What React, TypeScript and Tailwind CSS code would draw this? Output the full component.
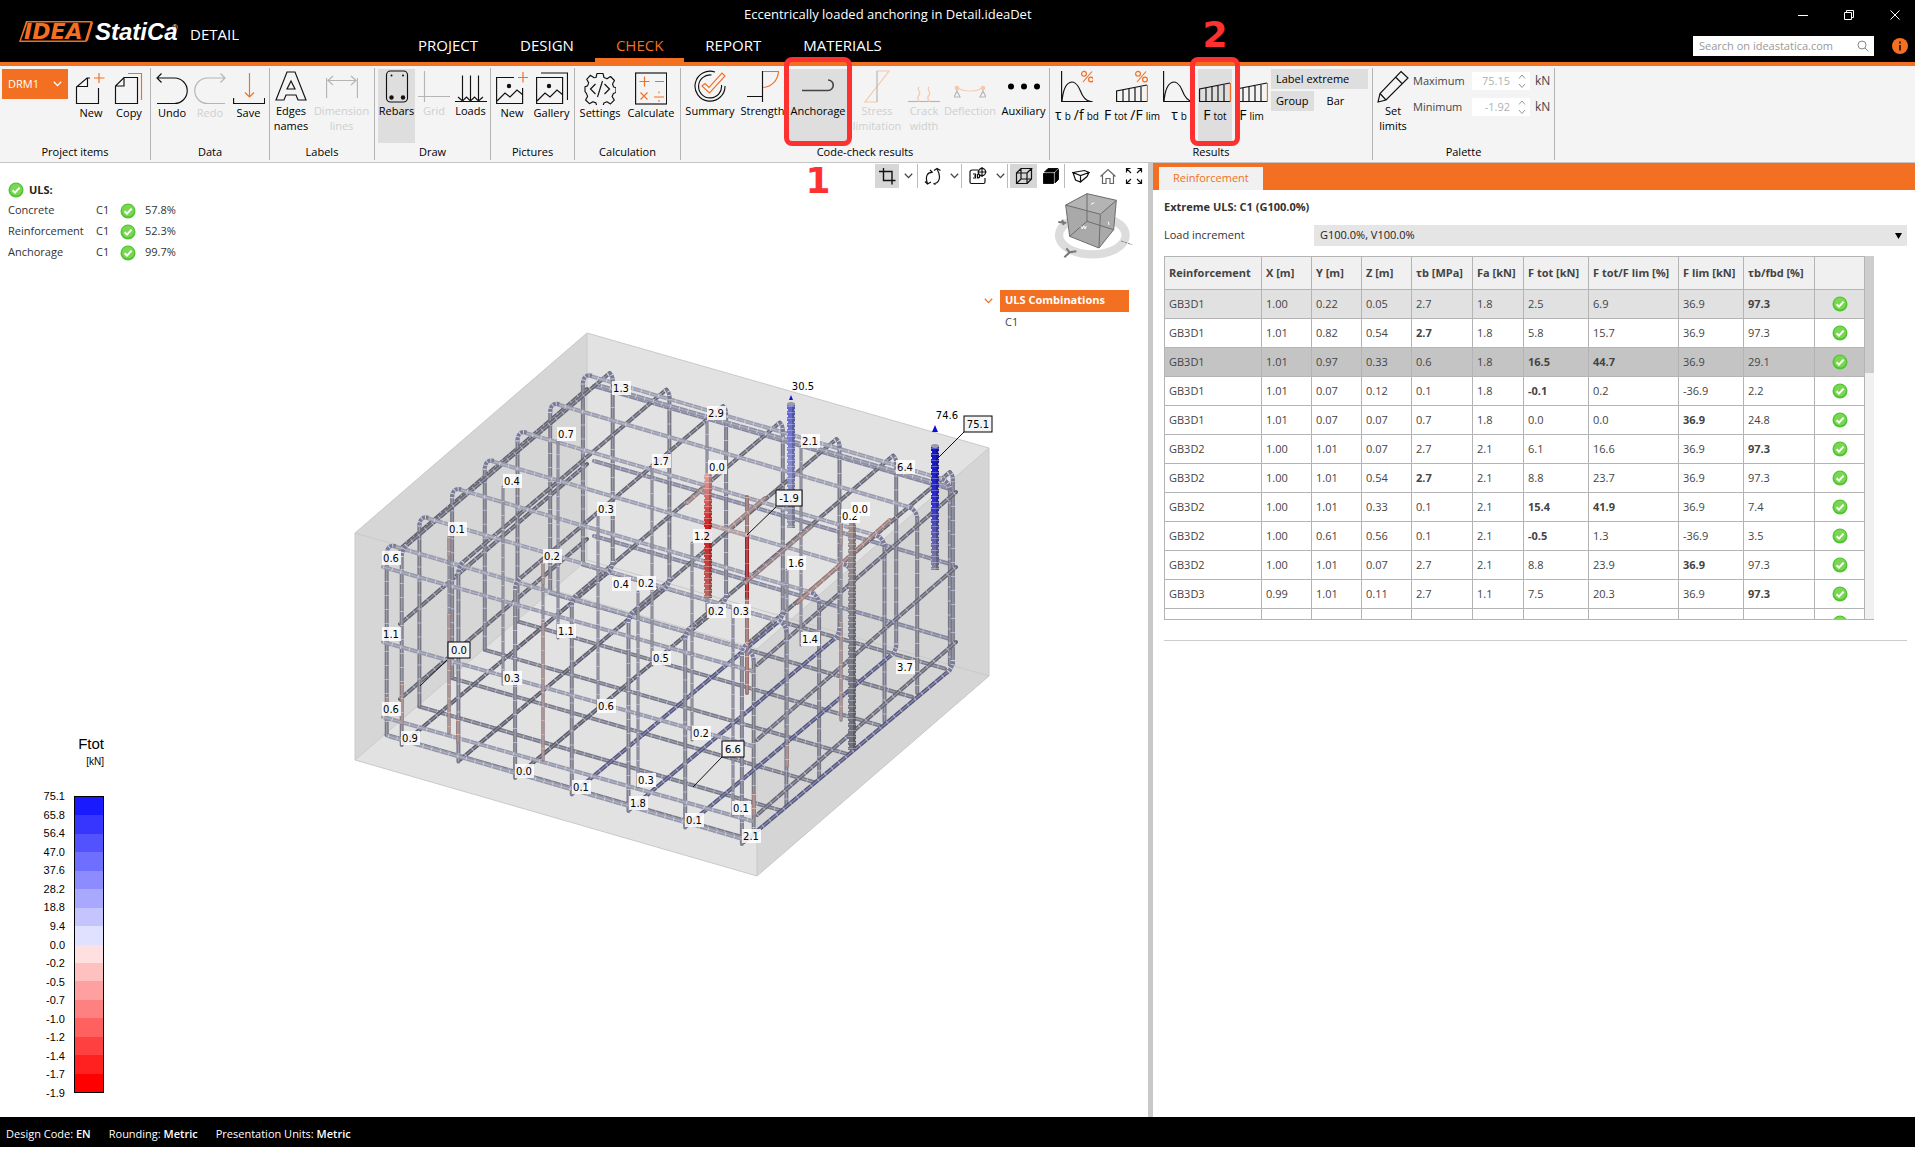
import type { ReactNode } from "react";
import { clsx } from "clsx";

const ORANGE = "#f36f21";

/* ---------- small shared bits ---------- */

function Check({ size = 16 }: { size?: number }) {
  return (
    <svg width={size} height={size} viewBox="0 0 16 16" className="shrink-0">
      <circle cx="8" cy="8" r="7.5" fill="#4fc531" />
      <circle cx="8" cy="7.6" r="6" fill="#7ad653" />
      <path d="M4.6 8.2 7 10.6l4.6-5" fill="none" stroke="#fff" strokeWidth="2" />
    </svg>
  );
}

function Chevron({ color = "#444" }: { color?: string }) {
  return (
    <svg width="9" height="6" viewBox="0 0 9 6" fill="none" stroke={color} strokeWidth="1.3">
      <path d="M.8.8 4.5 4.6 8.2.8" />
    </svg>
  );
}

function Icon({ children, color = "#111" }: { children: ReactNode; color?: string }) {
  return (
    <svg width="32" height="33" viewBox="0 0 32 33" fill="none" stroke={color} strokeWidth="1.150" className="shrink-0">
      {children}
    </svg>
  );
}

/* ---------- ribbon icons ---------- */

const icons = {
  newDoc: (
    <Icon>
      <path d="M15 6h-3L1.500 15v16.500h22V16M12.500 6v8.500h-11" />
      <path d="M24 1v10M19 6h10.500" stroke={ORANGE} />
    </Icon>
  ),
  copy: (
    <Icon>
      <path d="M11 5.500h13.500v26h-22V14zM11 5.500V14H2.500" />
      <path d="M15 1.500h13.500V28" stroke={ORANGE} />
    </Icon>
  ),
  undo: (
    <Icon>
      <path d="M1 31.500h17.500a12.750 12.750 0 0 0 0-25.500H1M5.500 1.500 1 6l4.500 4.500" />
    </Icon>
  ),
  redo: (
    <Icon color="#b5b5b5">
      <path d="M31 31.500H13.500a12.750 12.750 0 0 1 0-25.500H31M26.500 1.500 31 6l-4.500 4.500" />
    </Icon>
  ),
  save: (
    <Icon>
      <path d="M.6 26v5.500h31V26" />
      <path d="M16.500 1v24M12 20.500l4.500 4.500 4.500-4.500" stroke={ORANGE} />
    </Icon>
  ),
  edges: (
    <Icon>
      <path d="M12 2h8l11 28h-8l-2-5H11l-2 5H1zM16 11l-4 8h8z" />
    </Icon>
  ),
  dimension: (
    <Icon color="#b5b5b5">
      <path d="M.6 8v20M31.400 8v20M2 10.500h28M7 6l-5 4.500L7 15M25 6l5 4.500-5 4.500" />
    </Icon>
  ),
  rebars: (
    <Icon>
      <rect x="5.500" y="1" width="21" height="31" rx="4" />
      <g fill="#111" stroke="none">
        <circle cx="10.500" cy="5.500" r="1" />
        <circle cx="22" cy="5.500" r="1" />
        <circle cx="10.500" cy="27.500" r="2.200" />
        <circle cx="22" cy="27.500" r="2.200" />
      </g>
    </Icon>
  ),
  grid: (
    <Icon color="#b5b5b5">
      <path d="M6.500 1v31M0 26.500h32" />
    </Icon>
  ),
  loads: (
    <Icon>
      <path d="M0 31.500h32M7.500 5.500V31M15.500 5.500V31M23.500 5.500V31M3 27l4.500 4 4-4 4 4 4-4 4 4 4.500-4" />
    </Icon>
  ),
  picture: (
    <Icon>
      <path d="M18 5.500H.6v26h26V16M1 29l8-8 5 4 7-7 6 5" />
      <circle cx="13" cy="14" r="1.600" fill="#111" />
      <path d="M27 0v10.500M22 5.500h10" stroke={ORANGE} />
    </Icon>
  ),
  gallery: (
    <Icon>
      <path d="M.6 5.500h26v26H.6zM5 1h26.500v27M1 29l8-8 5 4 7-7 6 5" />
      <circle cx="13" cy="14" r="1.600" fill="#111" />
    </Icon>
  ),
  settings: (
    <Icon>
      <path d="M13 1.500h6l1 4 3 1.300 3.500-2.300 4 4-2 3.500 1.200 3 2.300.8v4.700l-2.600 1-1.300 3 2.200 3.600-3.800 3.800-3.600-2.100-3 1.200-1 3.500h-6l-1-3.600-3-1.200-3.500 2-3.800-3.700 2-3.600-1.200-3L1 19.500v-4.700l2.500-.9 1.200-3-2-3.600 3.600-4 3.800 2.400L12 5.500z" strokeLinejoin="round" />
      <path d="m11.500 12-5 5 5 5M20.500 12l5 5-5 5M18.500 9l-5 16" />
    </Icon>
  ),
  calculate: (
    <Icon>
      <rect x=".6" y="1" width="31" height="31" />
      <path d="M4.500 9.500h10M9.500 4.500v10M20 9.500h9M5.500 20.500l7 7M12.500 20.500l-7 7M19 25h10M24 19.500v1.800M24 28v1.800" stroke={ORANGE} />
    </Icon>
  ),
  summary: (
    <Icon>
      <path d="M21 2a15 15 0 1 0 10 14M17.500 5a11.500 11.500 0 1 0 10 10" />
      <path d="m8 16 3-2.500 4 4L28 3l3 3-15.500 17z" stroke={ORANGE} />
    </Icon>
  ),
  strength: (
    <Icon>
      <path d="M0 26.500h16M15.500 1v31" />
      <path d="M16 1.500h15.500C31 10 25 16.500 16 17.500" stroke={ORANGE} />
    </Icon>
  ),
  anchorage: (
    <Icon color="#444">
      <path d="M0 20.500h26a5 5 0 0 0 0-10.500" strokeWidth="1.600" />
    </Icon>
  ),
  stress: (
    <Icon color="#b5b5b5">
      <path d="M16 1h12L4 32h12" stroke="#f8c7a9" />
      <path d="M16 1v31" />
    </Icon>
  ),
  crack: (
    <Icon color="#b5b5b5">
      <path d="M0 31.500h32" />
      <path d="M11 17c-3 3 3 5 0 8s0 5 0 7M21 17c-3 3 3 5 0 8s0 5 0 7" stroke="#f8c7a9" />
    </Icon>
  ),
  deflection: (
    <Icon color="#b5b5b5">
      <path d="M3 18v3L0 27h6l-3-6M29 18v3l-3 6h6l-3-6" />
      <path d="M3 18c8 4 18 4 26 0" stroke="#f8c7a9" />
      <g fill="#f8c7a9" stroke="none">
        <circle cx="3" cy="18" r="2.300" />
        <circle cx="29" cy="18" r="2.300" />
      </g>
    </Icon>
  ),
  auxiliary: (
    <Icon>
      <g fill="#000" stroke="none">
        <circle cx="3" cy="16.500" r="3" />
        <circle cx="16" cy="16.500" r="3" />
        <circle cx="29" cy="16.500" r="3" />
      </g>
    </Icon>
  ),
  curvePercent: (
    <Icon>
      <path d="M.6 1v30.500h31M1 31.500C3 8 14 8 19 20c3 8 7 11.500 11 11.500" />
      <g stroke={ORANGE}>
        <path d="M31 1.500 22 12" />
        <circle cx="23" cy="3.800" r="2.400" />
        <circle cx="30" cy="9.500" r="2.400" />
      </g>
    </Icon>
  ),
  curve: (
    <Icon>
      <path d="M.6 1v30.500h31M1 31.500C3 8 14 8 19 20c3 8 7 11.500 11 11.500" />
    </Icon>
  ),
  barsPercent: (
    <Icon>
      <path d="M31 31.500H.6V21L31 15M7 20v12M13 19v13M19 18v14M25 17v15" />
      <path d="M31.400 15v17" stroke={ORANGE} />
      <g stroke={ORANGE}>
        <path d="M30 1.500 21 12" />
        <circle cx="22" cy="3.800" r="2.400" />
        <circle cx="29" cy="9.500" r="2.400" />
      </g>
    </Icon>
  ),
  bars: (
    <Icon>
      <path d="M31 31.500H.6V19L31 13M7 18v14M13 17v15M19 16v16M25 15v17" />
      <path d="M31.400 13v19" stroke={ORANGE} />
    </Icon>
  ),
  pencil: (
    <Icon>
      <path d="M24 1.500 31 8 9 30l-8 2 2-8.500zM18.500 7l7 7M3 23.500 9 30" />
    </Icon>
  ),
};

/* ---------- ribbon ---------- */

type ToolProps = {
  icon: ReactNode;
  label: ReactNode;
  width: string;
  low?: boolean;
  disabled?: boolean;
  active?: boolean;
  mark?: ReactNode;
};

function Tool({ icon, label, width, low, disabled, active, mark }: ToolProps) {
  return (
    <button
      type="button"
      disabled={disabled}
      className={clsx(
        "relative flex h-[74px] shrink-0 flex-col items-center whitespace-pre text-center text-[11px] leading-[15px]",
        width,
        low ? "pt-[3px]" : "pt-px",
        disabled ? "text-[#cfcfcf]" : "text-black",
        active && "bg-[#dedede]",
      )}
    >
      {icon}
      <span>{label}</span>
      {mark}
    </button>
  );
}

function Sym({ parts }: { parts: [string, string][] }) {
  return (
    <span className="flex items-baseline justify-center gap-[3px] pt-1">
      {parts.map(([big, small]) => (
        <span key={big + small} className="text-[14px]">
          {big}
          <span className="pl-[3px] text-[10px]">{small}</span>
        </span>
      ))}
    </span>
  );
}

function Group({ title, width, children }: { title: string; width: string; children: ReactNode }) {
  return (
    <section className={clsx("flex h-[92px] shrink-0 flex-col justify-between border-r border-[#b4b4b4]", width)}>
      <div className="flex pt-px">{children}</div>
      <h2 className="text-center text-[11px] leading-[16px]">{title}</h2>
    </section>
  );
}

function Limit({ label, value }: { label: string; value: string }) {
  const id = label.toLowerCase();
  return (
    <div className="flex items-center text-[#444]">
      <label htmlFor={id} className="w-[59px] text-[11px]">
        {label}
      </label>
      <div className="flex h-[18px] w-[58px] items-center bg-white pr-1">
        <input id={id} defaultValue={value} className="w-full min-w-0 text-right text-[11px] text-[#b0b0b0]" />
        <svg width="8" height="16" viewBox="0 0 8 16" fill="none" stroke="#999" className="ml-2 shrink-0">
          <path d="M1 5.500 4 2l3 3.500M1 11l3 3.500L7 11" />
        </svg>
      </div>
      <span className="pl-[5px] text-[12px]">kN</span>
    </div>
  );
}

function Ribbon() {
  return (
    <div className="flex h-[97px] border-b border-[#c4c4c4] bg-[#f4f4f4] pt-0.5">
      <Group title="Project items" width="w-[151px]">
        <button type="button" className="ml-0.5 mr-1 flex h-[30px] w-[66px] items-center justify-between bg-[#f36f21] px-1.5 text-[11px] text-white">
          DRM1
          <Chevron color="#fff" />
        </button>
        <Tool icon={icons.newDoc} label="New" width="w-[38px]" low />
        <Tool icon={icons.copy} label="Copy" width="w-[38px]" low />
      </Group>
      <Group title="Data" width="w-[119px]">
        <span className="w-0.5" />
        <Tool icon={icons.undo} label="Undo" width="w-[38px]" low />
        <Tool icon={icons.redo} label="Redo" width="w-[38px]" low disabled />
        <Tool icon={icons.save} label="Save" width="w-[39px]" low />
      </Group>
      <Group title="Labels" width="w-[105px]">
        <Tool icon={icons.edges} label={"Edges\nnames"} width="w-[42px]" />
        <Tool icon={icons.dimension} label={"Dimension\nlines"} width="w-[59px]" disabled />
      </Group>
      <Group title="Draw" width="w-[116px]">
        <span className="w-[3px]" />
        <Tool icon={icons.rebars} label="Rebars" width="w-[37px]" active />
        <Tool icon={icons.grid} label="Grid" width="w-[38px]" disabled />
        <Tool icon={icons.loads} label="Loads" width="w-[35px]" />
      </Group>
      <Group title="Pictures" width="w-[84px]">
        <Tool icon={icons.picture} label="New" width="w-[42px]" low />
        <Tool icon={icons.gallery} label="Gallery" width="w-[37px]" low />
      </Group>
      <Group title="Calculation" width="w-[106px]">
        <Tool icon={icons.settings} label="Settings" width="w-[50px]" low />
        <Tool icon={icons.calculate} label="Calculate" width="w-[52px]" low />
      </Group>
      <Group title="Code-check results" width="w-[369px]">
        <span className="w-[3px]" />
        <Tool icon={icons.summary} label="Summary" width="w-[52px]" />
        <Tool icon={icons.strength} label="Strength" width="w-[53px]" />
        <Tool
          icon={icons.anchorage}
          label="Anchorage"
          width="w-[58px]"
          active
          mark={
            <>
              <span className="absolute -left-[5px] -top-3 z-10 h-[89px] w-[68px] rounded-lg border-[5px] border-[#fe3131]" />
              <strong className="absolute top-[92px] w-full font-['DejaVu_Sans',sans-serif] text-[36px] leading-[40px] text-[#fe3131]">1</strong>
            </>
          }
        />
        <Tool icon={icons.stress} label={"Stress\nlimitation"} width="w-[60px]" disabled />
        <Tool icon={icons.crack} label={"Crack\nwidth"} width="w-[34px]" disabled />
        <Tool icon={icons.deflection} label="Deflection" width="w-[58px]" disabled />
        <Tool icon={icons.auxiliary} label="Auxiliary" width="w-[49px]" />
      </Group>
      <Group title="Results" width="w-[323px]">
        <Tool icon={icons.curvePercent} label={<Sym parts={[["τ", "b"], ["/f", "bd"]]} />} width="w-[54px]" />
        <Tool icon={icons.barsPercent} label={<Sym parts={[["F", "tot"], ["/F", "lim"]]} />} width="w-[56px]" />
        <Tool icon={icons.curve} label={<Sym parts={[["τ", "b"]]} />} width="w-[38px]" />
        <Tool
          icon={icons.bars}
          label={<Sym parts={[["F", "tot"]]} />}
          width="w-[34px]"
          active
          mark={
            <>
              <span className="absolute -left-2 -top-3 z-10 h-[89px] w-[50px] rounded-lg border-[5px] border-[#fe3131]" />
              <strong className="absolute -top-[54px] w-full font-['DejaVu_Sans',sans-serif] text-[36px] leading-[40px] text-[#fe3131]">2</strong>
            </>
          }
        />
        <Tool icon={icons.bars} label={<Sym parts={[["F", "lim"]]} />} width="w-[39px]" />
        <div className="flex flex-1 flex-col items-start gap-0.5 pr-1 text-[11px]">
          <button type="button" className="h-5 w-full bg-[#dedede] px-[5px] text-left">Label extreme</button>
          <div className="flex gap-3">
            <button type="button" className="h-5 bg-[#dedede] px-[5px]">Group</button>
            <button type="button" className="h-5 px-px">Bar</button>
          </div>
        </div>
      </Group>
      <Group title="Palette" width="w-[182px]">
        <Tool icon={icons.pencil} label={"Set\nlimits"} width="w-[40px]" />
        <div className="flex flex-col gap-2 pt-[3px]">
          <Limit label="Maximum" value="75.15" />
          <Limit label="Minimum" value="-1.92" />
        </div>
      </Group>
    </div>
  );
}

/* ---------- header ---------- */

function Logo() {
  return (
    <svg width="160" height="26" viewBox="0 0 160 26" className="shrink-0">
      <path d="M8 2h65a2 2 0 0 1 2 2l-5 17a3 3 0 0 1-3 2H1z" fill={ORANGE} />
      <path d="M9.500 3.500h63l-5.500 18H3z" fill="#000" />
      <text x="6" y="20" fill={ORANGE} fontFamily="DejaVu Sans" fontWeight="700" fontStyle="italic" fontSize="22">IDEA</text>
      <text x="77" y="21" fill="#fff" fontFamily="Liberation Sans" fontWeight="700" fontStyle="italic" fontSize="24">StatiCa</text>
      <text x="157" y="11" fill="#fff" fontFamily="Liberation Sans" fontSize="8" textAnchor="middle">®</text>
    </svg>
  );
}

const tabs = ["PROJECT", "DESIGN", "CHECK", "REPORT", "MATERIALS"];

function Header() {
  return (
    <header className="flex h-[66px] border-b-4 border-[#f36f21] bg-black text-white">
      <div className="flex w-[397px] items-start gap-3 pl-[18px] pt-[19px]">
        <Logo />
        <span className="pt-[3px] text-[15px] leading-[24px]">DETAIL</span>
      </div>
      <div className="flex flex-1 flex-col justify-between">
        <h1 className="pl-[347px] text-[13px] leading-[28px]">Eccentrically loaded anchoring in Detail.ideaDet</h1>
        <nav className="flex">
          {tabs.map((t) => (
            <a
              key={t}
              href="#"
              className={clsx(
                "border-b-4 px-[21px] text-[15px] leading-[26px]",
                t === "CHECK" ? "border-[#f36f21] text-[#f36f21]" : "border-black",
              )}
            >
              {t}
            </a>
          ))}
        </nav>
      </div>
      <div className="flex flex-col items-end gap-[7px]">
        <div className="flex h-[29px] items-center gap-9 pr-[15px]">
          <button type="button" aria-label="Minimize">
            <svg width="10" height="10" stroke="#fff"><path d="M0 5.500h10" /></svg>
          </button>
          <button type="button" aria-label="Restore">
            <svg width="10" height="10" viewBox="0 0 10 10" fill="none" stroke="#fff"><path d="M.5 2.500h7v7h-7zM2.500 2.500v-2h7v7h-2" /></svg>
          </button>
          <button type="button" aria-label="Close">
            <svg width="10" height="10" viewBox="0 0 10 10" stroke="#fff"><path d="m.5.5 9 9M9.500.5l-9 9" /></svg>
          </button>
        </div>
        <div className="flex items-center gap-[18px] pr-[7px]">
          <label className="flex h-5 w-[181px] items-center bg-white px-1.5 pr-[5px]">
            <input aria-label="Search" placeholder="Search on ideastatica.com" className="w-full min-w-0 text-[11px] text-black placeholder:text-[#999]" />
            <svg width="12" height="12" viewBox="0 0 12 12" fill="none" stroke="#888" className="shrink-0">
              <circle cx="5" cy="5" r="4" />
              <path d="m8 8 3.500 3.500" />
            </svg>
          </label>
          <svg width="16" height="16" viewBox="0 0 16 16">
            <circle cx="8" cy="8" r="8" fill={ORANGE} />
            <path d="M8 3.500v2M8 7v5.500" stroke="#402010" strokeWidth="2" />
          </svg>
        </div>
      </div>
    </header>
  );
}

/* ---------- 3D model ---------- */

type Pt = [number, number];
type Bar = { a: Pt; b: Pt; body: string; tick: string; w: number };

const STEEL = "#777782";
const seven = [0, 1, 2, 3, 4, 5, 6];

function buildBars(): Bar[] {
  const bars: Bar[] = [];
  const add = (a: Pt, b: Pt, body = STEEL, tick = "#c3c5ea", w = 4) => bars.push({ a, b, body, tick, w });

  // back and left sides of the three horizontal rings
  [567, 642, 717].forEach((y) => {
    add([400, y - 18], [587, y - 178], "#61616b");
    add([594, y - 181], [950, y - 78], "#85869a");
  });
  // stirrups parallel to the long side
  [...seven].reverse().forEach((i) => {
    const x = 386.7 + 32.7 * i;
    const y = 547 - 28.400 * i;
    add([x, y + 188], [x + 362, y + 292], "#777884");
    add([x, y + 6], [x, y + 188]);
    add([x + 367, y + 112], [x + 367, y + 288]);
  });
  // stirrups across
  seven.forEach((i) => {
    const x = 401.7 + 56.7 * i;
    const y = 551 + 16.500 * i;
    add([x + 211, y - 172], [x + 211, y + 14]);
    add([x + 208, y + 20], [x + 2, y + 192], i > 2 ? "#55567c" : "#5b5b66");
    add([x + 3, y - 4], [x + 208, y - 178], "#63636d");
    add([x, y + 4], [x, y + 194], "#7b7b88");
  });
  // top legs and the near sides of the rings
  seven.forEach((i) => {
    const x = 386.7 + 32.7 * i;
    const y = 547 - 28.400 * i;
    add([x + 6, y - 1], [x + 362, y + 103], "#9b9cab", "#d6d7ee");
  });
  [567, 642, 717].forEach((y) => {
    add([383, y], [752, y + 104], "#9698a8", "#d6d7ee");
    add([757, y + 98], [956, y - 75], "#666672");
  });
  add([388, 736], [743, 839], "#9698a8", "#d6d7ee");
  add([601, 386], [950, 487], "#8e8fa0", "#d6d7ee");

  // single ties
  const ties: [number, number, number][] = [
    [558, 440, 638], [503, 487, 684], [652, 465, 665], [598, 512, 708], [638, 592, 787],
    [707, 420, 610], [692, 543, 740], [801, 447, 645], [733, 610, 815], [787, 570, 760],
    [449, 537, 733], [543, 563, 760], [841, 523, 720],
  ];
  ties.forEach(([x, y1, y2]) => add([x, y1], [x, y2], "#7b7b86", "#c3c5ea", 3));
  const warm = "#998280";
  const glow = "#e8b8ad";
  add([449, 537], [449, 556], warm, glow, 3);
  add([449, 614], [449, 733], warm, glow, 3);
  add([543, 563], [543, 584], warm, glow, 3);
  add([543, 622], [543, 760], warm, glow, 3);
  add([841, 523], [841, 545], warm, glow, 3);
  add([841, 622], [841, 720], warm, glow, 3);
  add([747, 497], [747, 535], "#94706d", glow, 4);
  add([747, 535], [747, 600], "#a01f1f", "#e87468", 4);
  add([747, 600], [747, 693], "#98716e", glow, 4);
  add([890, 520], [797, 603], "#9c7c79", glow);
  add([687, 503], [705, 487], warm, glow);
  add([727, 530], [765, 498], warm, glow);
  add([745, 583], [812, 526], "#8d7d80", glow);
  add([711, 525], [747, 535], "#b39f9f", "#ecc9bf");
  add([402, 684], [402, 724], warm, glow, 3);
  add([387, 697], [387, 712], warm, glow, 3);
  add([458, 720], [458, 742], warm, glow, 4);
  add([754, 794], [754, 815], warm, glow, 4);
  add([787, 745], [787, 766], warm, glow, 4);
  return bars;
}

const bars = buildBars();

// rounded bends on the top and bottom of the stirrups
const bends = [
  ...seven.map((i) => {
    const x = 386.7 + 32.7 * i;
    const y = 547 - 28.400 * i;
    return `M${x} ${y + 8}q0-11 9-9M${x + 358} ${y + 102}q9 3 9 12`;
  }),
  ...seven.map((i) => {
    const x = 401.7 + 56.7 * i;
    const y = 551 + 16.500 * i;
    return `M${x} ${y + 6}q0-7 5-12M${x + 206} ${y - 176}q5-4 5 8M${x + 211} ${y + 10}q0 8-6 13`;
  }),
].join("");

const labels: [string, number, number][] = [
  ["1.3", 621, 388], ["0.7", 566, 434], ["1.7", 661, 461], ["0.4", 512, 481], ["0.3", 606, 509],
  ["0.1", 457, 529], ["0.6", 391, 558], ["0.2", 552, 556], ["0.4", 621, 584], ["0.2", 646, 583],
  ["2.9", 716, 413], ["0.0", 717, 467], ["2.1", 810, 441], ["6.4", 905, 467], ["0.2", 850, 516],
  ["0.0", 860, 509], ["1.2", 702, 536], ["1.6", 796, 563], ["0.2", 716, 611], ["0.3", 741, 611],
  ["1.1", 391, 634], ["1.1", 566, 631], ["0.5", 661, 658], ["0.3", 512, 678], ["0.6", 606, 706],
  ["0.6", 391, 709], ["0.9", 410, 738], ["0.0", 524, 771], ["0.1", 581, 787], ["0.3", 646, 780],
  ["1.8", 638, 803], ["1.4", 810, 639], ["3.7", 905, 667], ["0.2", 701, 733], ["0.1", 741, 808],
  ["0.1", 694, 820], ["2.1", 751, 836],
];

const boxed: [string, number, number, number][] = [
  ["0.0", 459, 650, 22],
  ["-1.9", 789, 498, 26],
  ["75.1", 978, 424, 28],
  ["6.6", 733, 749, 22],
];

function Anchor({ x, y1, y2, from, mid, to }: { x: number; y1: number; y2: number; from: string; mid: string; to: string }) {
  const id = `anchor-${x}`;
  return (
    <g>
      <linearGradient id={id} gradientUnits="userSpaceOnUse" x1={x} y1={y1} x2={x} y2={y2}>
        <stop offset="0" stopColor={from} />
        <stop offset="0.450" stopColor={mid} />
        <stop offset="1" stopColor={to} />
      </linearGradient>
      <rect x={x - 3} y={y1} width="6" height={y2 - y1} fill={`url(#${id})`} />
      <line x1={x} x2={x} y1={y1 + 2} y2={y2} stroke={`url(#${id})`} strokeWidth="8" strokeDasharray="4 2" />
      <rect x={x + 1} y={y1} width="3" height={y2 - y1} fill="#000" opacity="0.200" />
      <line x1={x} x2={x} y1={y1 + 3} y2={y2} stroke="#fff" strokeWidth="8" strokeDasharray="1 5" opacity="0.300" />
    </g>
  );
}

function Model() {
  return (
    <svg width="650" height="560" viewBox="350 325 650 560" className="ml-[350px] mt-[162px] [grid-area:1/1]">
      <path d="M355 533 587 333 989 448V676L757 876 355 760Z" fill="#e2e2e2" />
      <path d="M355 533 587 333V560L355 760Z" fill="#d6d6d6" />
      <path d="M757 649 989 448V676L757 876Z" fill="#d5d5d5" />
      <path d="M355 533 587 333 989 448V676L757 876 355 760ZM355 533 757 649 989 448M757 649V876M587 333V560M355 760 587 560 989 676" fill="none" stroke="#c9c9c9" />

      {bars.map((b, i) => {
        const ends = { x1: b.a[0], y1: b.a[1], x2: b.b[0], y2: b.b[1] };
        const vertical = b.a[0] === b.b[0];
        return (
          <g key={i}>
            <line {...ends} stroke={b.body} strokeWidth={b.w} strokeLinecap="round" />
            <line {...ends} stroke="#d8d9f0" strokeWidth="1.200" opacity="0.400" />
            <line {...ends} stroke={b.tick} strokeWidth={b.w} strokeDasharray={vertical ? "1 13" : "1 8"} opacity="0.800" />
          </g>
        );
      })}
      <path d={bends} fill="none" stroke="#7a7b90" strokeWidth="4" />
      <path d={bends} fill="none" stroke="#cfd1f2" strokeWidth="4" strokeDasharray="1 3" />

      <Anchor x={708} y1={473} y2={598} from="#d9a9a5" mid="#d01818" to="#b86a65" />
      <Anchor x={791} y1={403} y2={528} from="#5a60cc" mid="#8488d8" to="#9a9bab" />
      <Anchor x={935} y1={445} y2={570} from="#1212c0" mid="#2e2ed0" to="#85869c" />
      <Anchor x={852} y1={523} y2={750} from="#a0908f" mid="#7d7d89" to="#70707c" />
      <path d="M935 425l3 7h-6zM791 395l2 5h-4z" fill="#1010d0" />
      <ellipse cx="935" cy="446" rx="4" ry="2" fill="#9a9aa8" />
      <ellipse cx="791" cy="404" rx="4" ry="2" fill="#9a9aa8" />

      <path d="M447 660 420 686M776 507 747 535M964 432 936 460M722 757 693 787" stroke="#111" />
      <g fontFamily="DejaVu Sans" fontSize="10" textAnchor="middle" fill="#000">
        {labels.map(([t, x, y]) => (
          <g key={`${x}-${y}`}>
            <rect x={x - 9} y={y - 7} width="19" height="14" fill="#fff" opacity="0.850" />
            <text x={x} y={y + 4}>{t}</text>
          </g>
        ))}
        {boxed.map(([t, x, y, w]) => (
          <g key={`${x}-${y}`}>
            <rect x={x - w / 2} y={y - 8} width={w} height="16" fill="#f4f4f4" stroke="#000" />
            <text x={x} y={y + 4}>{t}</text>
          </g>
        ))}
        <text x="803" y="390">30.5</text>
        <text x="947" y="419">74.6</text>
      </g>
    </svg>
  );
}

/* ---------- viewport ---------- */

const results = [
  ["Concrete", "C1", "57.8%"],
  ["Reinforcement", "C1", "52.3%"],
  ["Anchorage", "C1", "99.7%"],
];

const scale = [
  "#1a1aff", "#3636ff", "#5252ff", "#6e6eff", "#8c8cff", "#a8a8ff", "#c4c4ff", "#e0e0ff",
  "#ffe0e0", "#ffc0c0", "#ffa0a0", "#ff8080", "#ff6060", "#ff4040", "#ff2020", "#ff0000",
];
const scaleLabels = [
  "75.1", "65.8", "56.4", "47.0", "37.6", "28.2", "18.8", "9.4", "0.0",
  "-0.2", "-0.5", "-0.7", "-1.0", "-1.2", "-1.4", "-1.7", "-1.9",
];

function Legend() {
  return (
    <div className="w-[104px] font-['Liberation_Sans',sans-serif] text-black">
      <div className="text-right text-[15px] leading-[20px]">Ftot</div>
      <div className="text-right text-[10px] leading-[16px]">[kN]</div>
      <div className="mt-[20px] flex justify-end gap-[9px]">
        <div className="flex h-[309px] flex-col justify-between text-right text-[11px] leading-[12px]">
          {scaleLabels.map((l) => (
            <span key={l}>{l}</span>
          ))}
        </div>
        <div className="mt-1.5 flex h-[297px] w-[30px] flex-col border border-black">
          {scale.map((c) => (
            <div key={c} className="flex-1" style={{ backgroundColor: c }} />
          ))}
        </div>
      </div>
    </div>
  );
}

function ViewButton({ label, width, active, children }: { label: string; width: string; active?: boolean; children: ReactNode }) {
  return (
    <button type="button" aria-label={label} className={clsx("flex h-6 items-center justify-center", width, active && "bg-[#d6d6d6]")}>
      {children}
    </button>
  );
}

function ViewIcon({ children }: { children: ReactNode }) {
  return (
    <svg width="18" height="18" viewBox="0 0 18 18" fill="none" stroke="#111" strokeWidth="1.200">
      {children}
    </svg>
  );
}

const Divider = () => <span className="h-6 w-px bg-[#bbb]" />;

function ViewToolbar() {
  return (
    <div className="flex h-[26px] items-center">
      <ViewButton label="Crop" width="w-[24px]" active>
        <ViewIcon><path d="M1 4.500h13v13M5.500 1v12.500h12" strokeWidth="1.400" /></ViewIcon>
      </ViewButton>
      <ViewButton label="Crop options" width="w-[18px]"><Chevron /></ViewButton>
      <Divider />
      <ViewButton label="Rotate" width="w-[30px]">
        <ViewIcon>
          <path d="M8.500 5.500C3 5 1 10 3.500 16.500M1 14.500l2.500 2.500L7 15" />
          <path d="M9.500 16.500c6 0 8-7 3.500-14.500M10 3.500l3-2 3.500 2M8.500 5.500 6 3M9.500 16.500l2 1" />
        </ViewIcon>
      </ViewButton>
      <ViewButton label="Rotate options" width="w-[13px]"><Chevron /></ViewButton>
      <Divider />
      <ViewButton label="3D view" width="w-[32px]">
        <ViewIcon>
          <path d="M9 3H3a2 2 0 0 0-2 2v10a1.500 1.500 0 0 0 1.500 1.500h12A1.500 1.500 0 0 0 16 15v-4M4 7h2.500v4H4M5 9h1.500M8.500 7v4c3 0 3-4 0-4" />
          <circle cx="13" cy="5" r="3.600" />
          <path d="M13 0v10M8.500 5h9" />
        </ViewIcon>
      </ViewButton>
      <ViewButton label="3D view options" width="w-[13px]"><Chevron /></ViewButton>
      <Divider />
      <ViewButton label="Wireframe" width="ml-0.5 w-[27px]" active>
        <ViewIcon><path d="M1.500 6h10.500v10.500H1.500zM1.500 6l4.500-4.500h10.500L12 6M16.500 1.500V12L12 16.500M6 1.500V12h10.500M6 12l-4.500 4.500" /></ViewIcon>
      </ViewButton>
      <ViewButton label="Solid" width="w-[27px]">
        <ViewIcon>
          <path d="M1.500 6.500h10v10h-10zM2.500 5 6 1.500h10L12.500 5zM13 6l3.500-3.500v10L13 16z" fill="#000" strokeWidth="1" />
        </ViewIcon>
      </ViewButton>
      <Divider />
      <ViewButton label="Camera" width="w-[31px]">
        <ViewIcon><path d="M1 5.500 12.500 3.500l4.500 2-8.500 3zM1 5.500 3.500 13l5 2V8.500M8.500 15 15 9.500l2-4" /></ViewIcon>
      </ViewButton>
      <ViewButton label="Home" width="w-[24px]">
        <ViewIcon><path d="m1.500 9.500 7.500-7 7.500 7M3.500 8v8.500h3.500v-5h4v5h3.500V8" stroke="#666" /></ViewIcon>
      </ViewButton>
      <ViewButton label="Full screen" width="w-[28px]">
        <ViewIcon><path d="M1.500 5.500v-4h4M1.500 1.500 6 6M12.500 1.500h4v4M16.500 1.500 12 6M1.500 12.500v4h4M1.500 16.500 6 12M12.500 16.500h4v-4M16.500 16.500 12 12" /></ViewIcon>
      </ViewButton>
    </div>
  );
}

function NavCube() {
  return (
    <svg width="80" height="70" viewBox="0 0 240 210" className="mr-[15px]">
      <ellipse cx="118" cy="139" rx="100" ry="57" fill="none" stroke="#dcdcdc" strokeWidth="25" />
      <path d="M38 48 102 14l88 20-8 88-44 55-88-35z" fill="#a9a9a9" />
      <path d="M38 48 102 14l88 20-48 42z" fill="#b4b4b4" />
      <path d="M38 48 102 14l88 20-8 88-44 55-88-35zM38 48l104 28 48-42M142 76l-4 101M102 14v83M50 142l52-45 80 25" fill="none" stroke="#6d6d6d" strokeWidth="3" />
      <path d="m114 46 10-5M168 108l-2-10M84 112l4 8 4-10 4 10 4-9" stroke="#fff" strokeWidth="3" fill="none" />
      <path d="m34 205 16-15-10-12M50 190l20-3M16 99l24 2M28 92l4 16" stroke="#777" strokeWidth="6" fill="none" />
      <path d="m204 156 34 11" stroke="#888" strokeWidth="3" strokeDasharray="8 3" />
    </svg>
  );
}

function Viewport() {
  return (
    <main className="grid min-w-0 flex-[1148] border-r-[5px] border-[#c9c9c9]">
      <Model />
      <div className="z-10 flex items-stretch justify-between [grid-area:1/1]">
        <div className="flex flex-col justify-between pb-[18px]">
          <div className="pl-2 pt-[17px] text-[11px] text-[#333]">
            <div className="flex h-5 items-center gap-[5px] font-bold text-[#222]">
              <Check />
              ULS:
            </div>
            <ul>
              {results.map(([name, lc, pct]) => (
                <li key={name} className="flex h-[21px] items-center">
                  <span className="w-[88px]">{name}</span>
                  <span className="w-6">{lc}</span>
                  <Check />
                  <span className="pl-[9px]">{pct}</span>
                </li>
              ))}
            </ul>
          </div>
          <Legend />
        </div>
        <div className="flex flex-col items-end">
          <ViewToolbar />
          <NavCube />
          <div className="mr-[19px] mt-[31px] w-[145px] text-[11px] text-[#444]">
            <button type="button" className="flex w-full items-center gap-[7px]">
              <Chevron color={ORANGE} />
              <span className="h-[22px] flex-1 bg-[#f36f21] px-[5px] text-left text-[11px] font-bold leading-[20px] text-white">ULS Combinations</span>
            </button>
            <div className="pl-[21px] leading-[20px]">C1</div>
          </div>
        </div>
      </div>
    </main>
  );
}

/* ---------- results panel ---------- */

const columns = ["Reinforcement", "X [m]", "Y [m]", "Z [m]", "τb [MPa]", "Fa [kN]", "F tot [kN]", "F tot/F lim [%]", "F lim [kN]", "τb/fbd [%]"];

// an asterisk marks an extreme, drawn in bold
const rows = [
  "GB3D1 1.00 0.22 0.05 2.7 1.8 2.5 6.9 36.9 *97.3",
  "GB3D1 1.01 0.82 0.54 *2.7 1.8 5.8 15.7 36.9 97.3",
  "GB3D1 1.01 0.97 0.33 0.6 1.8 *16.5 *44.7 36.9 29.1",
  "GB3D1 1.01 0.07 0.12 0.1 1.8 *-0.1 0.2 -36.9 2.2",
  "GB3D1 1.01 0.07 0.07 0.7 1.8 0.0 0.0 *36.9 24.8",
  "GB3D2 1.00 1.01 0.07 2.7 2.1 6.1 16.6 36.9 *97.3",
  "GB3D2 1.00 1.01 0.54 *2.7 2.1 8.8 23.7 36.9 97.3",
  "GB3D2 1.00 1.01 0.33 0.1 2.1 *15.4 *41.9 36.9 7.4",
  "GB3D2 1.00 0.61 0.56 0.1 2.1 *-0.5 1.3 -36.9 3.5",
  "GB3D2 1.00 1.01 0.07 2.7 2.1 8.8 23.9 *36.9 97.3",
  "GB3D3 0.99 1.01 0.11 2.7 1.1 7.5 20.3 36.9 *97.3",
  "GB3D3 1.01 1.00 0.44 *2.7 1.1 6.8 18.3 36.9 97.3",
].map((r) => r.split(" "));

function ResultsTable() {
  return (
    <div className="flex h-[364px] w-fit overflow-hidden border-b border-[#b4b4b4]">
      <table className="w-[701px] table-fixed border-collapse self-start text-left text-[11px] text-[#444]">
        <colgroup>
          <col className="w-[97px]" />
          <col className="w-[50px]" />
          <col className="w-[50px]" />
          <col className="w-[50px]" />
          <col className="w-[61px]" />
          <col className="w-[51px]" />
          <col className="w-[65px]" />
          <col className="w-[90px]" />
          <col className="w-[65px]" />
          <col className="w-[71px]" />
          <col className="w-[50px]" />
        </colgroup>
        <thead>
          <tr className="h-[33px] bg-[#f0f0f0]">
            {columns.map((c) => (
              <th key={c} className="whitespace-nowrap border border-[#b4b4b4] px-1 font-bold">{c}</th>
            ))}
            <th aria-label="Status" className="border border-[#b4b4b4]" />
          </tr>
        </thead>
        <tbody>
          {rows.map((r, i) => (
            <tr key={i} className={clsx("h-[29px]", i === 0 && "bg-[#e1e1e1]", i === 2 && "bg-[#c4c4c4]")}>
              {r.map((v, j) => (
                <td key={j} className={clsx("border border-[#b4b4b4] px-1", v.startsWith("*") && "font-bold")}>
                  {v.replace("*", "")}
                </td>
              ))}
              <td className="border border-[#b4b4b4] pl-[17px]"><Check /></td>
            </tr>
          ))}
        </tbody>
      </table>
      <div className="w-[9px] bg-[#f0f0f0]">
        <div className="h-[117px] bg-[#cdcdcd]" />
      </div>
    </div>
  );
}

function ResultsPanel() {
  return (
    <aside className="min-w-0 flex-[762]">
      <div className="flex h-[27px] items-end bg-[#f36f21] pl-1.5">
        <button type="button" className="h-[23px] bg-[#f1f1f1] px-[14px] text-[11px] text-[#f36f21]">Reinforcement</button>
      </div>
      <div className="pl-[11px] pr-2 text-[11px] text-[#333]">
        <h2 className="pt-[7px] font-bold leading-[20px]">Extreme ULS: C1 (G100.0%)</h2>
        <div className="mt-2 flex h-[21px] items-center">
          <label htmlFor="increment" className="w-[150px]">Load increment</label>
          <div className="relative flex-1">
            <select id="increment" className="h-[21px] w-full appearance-none bg-[#e5e5e5] px-1.5 text-[#222]">
              <option>G100.0%, V100.0%</option>
            </select>
            <svg width="7" height="6" className="pointer-events-none absolute right-[5px] top-2"><path d="M0 0h7L3.500 6z" /></svg>
          </div>
        </div>
        <div className="pt-[10px]">
          <ResultsTable />
        </div>
        <hr className="mt-[20px] border-[#ccc]" />
      </div>
    </aside>
  );
}

export default function App() {
  return (
    <div className="flex min-h-screen flex-col bg-white pb-[3px] pr-[5px] font-['Open_Sans','Noto_Sans',sans-serif]">
      <Header />
      <Ribbon />
      <div className="flex flex-1">
        <Viewport />
        <ResultsPanel />
      </div>
      <footer className="flex h-[30px] items-center gap-[18px] bg-black px-1.5 pt-1 text-[11px] text-white">
        <span>Design Code: <b className="font-semibold">EN</b></span>
        <span>Rounding: <b className="font-semibold">Metric</b></span>
        <span>Presentation Units: <b className="font-semibold">Metric</b></span>
      </footer>
    </div>
  );
}
